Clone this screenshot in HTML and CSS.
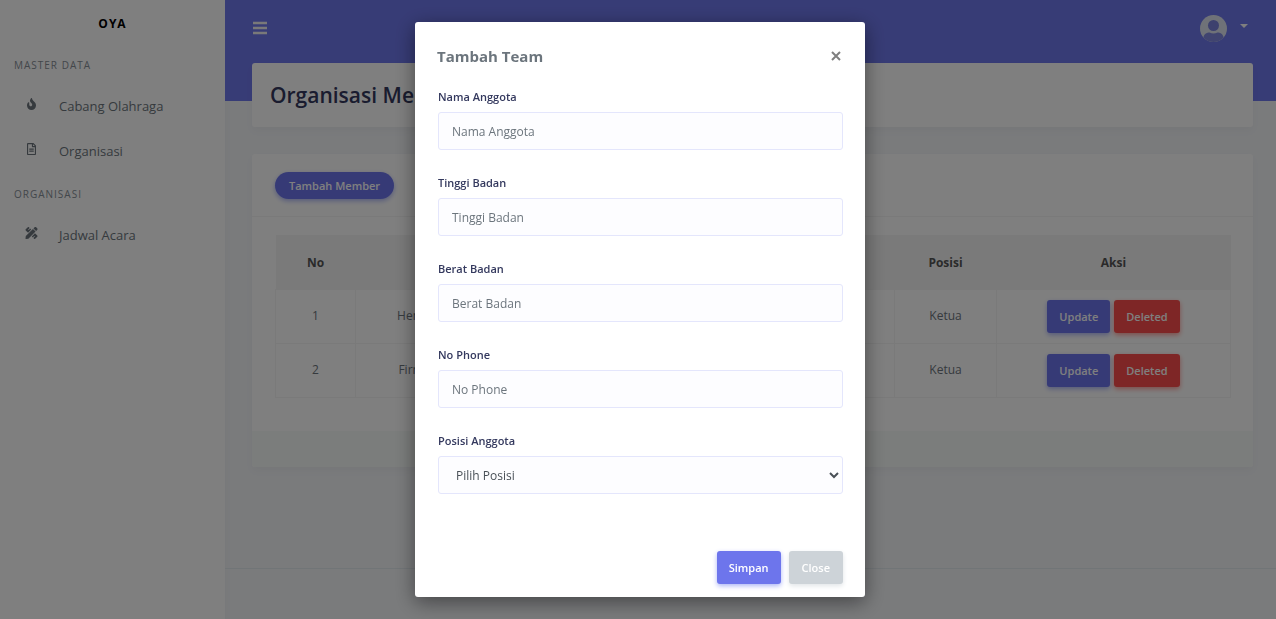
FILE: index.html
```html
<!DOCTYPE html>
<html lang="id">
<head>
<meta charset="utf-8">
<meta name="viewport" content="width=device-width, initial-scale=1">
<title>OYA</title>
<link rel="stylesheet" href="styles.css">
</head>
<body>
<div class="layout">
  <aside class="sidebar">
    <a class="brand" href="#">OYA</a>
    <nav class="menu">
      <h2 class="menu-header">MASTER DATA</h2>
      <a class="menu-link" href="#">
        <svg class="menu-icon" viewBox="0 0 384 512"><path d="M216 23.900c0-23.800-30.700-33-44-13.200C48 191.900 224 200 224 288c0 35.600-29.100 64.500-64.800 64-35.100-.5-63.200-29.800-63.200-64.900v-85.500c0-21.700-26.500-32.200-41.400-16.500C27.800 213.200 0 261.300 0 320c0 105.900 86.100 192 192 192s192-86.100 192-192c0-170.300-168-193-168-296.100z"/></svg>
        <span>Cabang Olahraga</span>
      </a>
      <a class="menu-link" href="#">
        <svg class="menu-icon" viewBox="0 0 384 512"><path d="M288 248v28c0 6.600-5.400 12-12 12H108c-6.600 0-12-5.400-12-12v-28c0-6.600 5.400-12 12-12h168c6.600 0 12 5.400 12 12zm-12 72H108c-6.600 0-12 5.400-12 12v28c0 6.600 5.400 12 12 12h168c6.600 0 12-5.400 12-12v-28c0-6.600-5.400-12-12-12zm108-188.100V464c0 26.500-21.500 48-48 48H48c-26.500 0-48-21.500-48-48V48C0 21.500 21.500 0 48 0h204.100C264.800 0 277 5.100 286 14.100L369.900 98c9 8.900 14.100 21.200 14.100 33.900zm-128-80V128h76.100L256 51.900zM336 464V176H232c-13.300 0-24-10.700-24-24V48H48v416h288z"/></svg>
        <span>Organisasi</span>
      </a>
      <h2 class="menu-header">ORGANISASI</h2>
      <a class="menu-link" href="#">
        <svg class="menu-icon" viewBox="0 0 512 512"><path d="M109.500 244l134.600-134.600-44.100-44.100-61.700 61.700a7.900 7.900 0 0 1-11.200 0l-11.200-11.200c-3.100-3.100-3.100-8.100 0-11.200l61.700-61.700-33.600-33.700C131-3.100 111.400-3.100 99 9.300L9.300 99c-12.400 12.400-12.400 32.500 0 45l100.200 100zM497.900 124.800c18.800-18.800 18.800-49.200 0-67.900l-42.800-42.800c-18.800-18.800-49.200-18.800-68 0l-46.300 46.300 110.800 110.800zM318.400 82.600L12.900 388.200.2 485.300c-1.900 15 10.800 27.700 25.800 26l97.200-12.900 305.600-305.500zM402.700 267.600L268 402.200l44.200 44.200 61.700-61.700a7.900 7.900 0 0 1 11.200 0l11.200 11.200c3.100 3.100 3.100 8.100 0 11.200l-61.700 61.700 33.600 33.700c12.400 12.400 32.500 12.400 45 0l89.700-89.700c12.400-12.400 12.400-32.500 0-45z"/></svg>
        <span>Jadwal Acara</span>
      </a>
    </nav>
  </aside>

  <div class="page">
    <header class="navbar">
      <button class="nav-button" type="button" aria-label="Menu">
        <svg class="bars" viewBox="0 0 14 14"><path d="M0 .8h14v2.400H0zM0 5.800h14v2.400H0zM0 10.800h14v2.400H0z"/></svg>
      </button>
      <button class="nav-button user" type="button" aria-label="Akun">
        <svg class="avatar" viewBox="0 0 54 54">
          <defs><clipPath id="disc"><circle cx="27" cy="27" r="27"/></clipPath></defs>
          <g clip-path="url(#disc)">
            <path class="avatar-back" d="M0 0h54v54H0z"/>
            <circle class="avatar-head" cx="27" cy="21" r="11"/>
            <path class="avatar-body" d="M7 54V44c2-7 7-9 12-9q8 4 16 0c5 0 10 2 12 9v10z"/>
          </g>
        </svg>
        <span class="caret"></span>
      </button>
    </header>

    <main class="content">
      <section class="card title-card"><h1 class="page-title">Organisasi Member</h1></section>

      <section class="card">
        <div class="card-header"><button class="button primary pill" type="button">Tambah Member</button></div>
        <div class="card-body">
          <table class="members">
            <colgroup><col class="col-no"><col class="col-name"><col><col><col><col class="col-position"><col class="col-action"></colgroup>
            <thead>
              <tr><th>No</th><th>Nama</th><th>Tinggi</th><th>Berat</th><th>Phone</th><th>Posisi</th><th>Aksi</th></tr>
            </thead>
            <tbody>
              <tr><td>1</td><td>Hendra Saputra</td><td></td><td></td><td></td><td>Ketua</td>
                <td><div class="actions"><button class="button primary" type="button">Update</button><button class="button danger" type="button">Deleted</button></div></td></tr>
              <tr><td>2</td><td>Firman Saputra</td><td></td><td></td><td></td><td>Ketua</td>
                <td><div class="actions"><button class="button primary" type="button">Update</button><button class="button danger" type="button">Deleted</button></div></td></tr>
            </tbody>
          </table>
        </div>
        <div class="card-footer"></div>
      </section>
    </main>
    <footer class="page-footer"></footer>
  </div>
</div>

<div class="backdrop">
  <form class="modal" role="dialog" aria-modal="true" aria-labelledby="modal-title">
    <div class="modal-header">
      <h2 class="modal-title" id="modal-title">Tambah Team</h2>
      <button class="close" type="button" aria-label="Tutup"><svg class="close-icon" viewBox="0 0 10 10"><path d="M1 1l8 8M9 1L1 9"/></svg></button>
    </div>
    <div class="modal-body">
      <div class="field"><label class="label" for="nama">Nama Anggota</label><input class="control" id="nama" type="text" placeholder="Nama Anggota"></div>
      <div class="field"><label class="label" for="tinggi">Tinggi Badan</label><input class="control" id="tinggi" type="text" placeholder="Tinggi Badan"></div>
      <div class="field"><label class="label" for="berat">Berat Badan</label><input class="control" id="berat" type="text" placeholder="Berat Badan"></div>
      <div class="field"><label class="label" for="phone">No Phone</label><input class="control" id="phone" type="text" placeholder="No Phone"></div>
      <div class="field"><label class="label" for="posisi">Posisi Anggota</label><select class="control" id="posisi"><option>Pilih Posisi</option><option>Ketua</option></select></div>
    </div>
    <div class="modal-footer">
      <button class="button primary" type="button">Simpan</button>
      <button class="button secondary" type="button">Close</button>
    </div>
  </form>
</div>
</body>
</html>
```
FILE: styles.css
```css
* { box-sizing: border-box; }

body {
  margin: 0;
  background: #f4f6f9;
  color: #6c757d;
  font: 12px/20px "Open Sans", "Noto Sans", sans-serif;
}

h1, h2 { margin: 0; }
a { color: inherit; text-decoration: none; }
button, input, select { font: inherit; }

.layout { display: flex; min-height: 100vh; }

.sidebar { flex: 0 0 225px; background: #fff; box-shadow: 0 4px 8px rgba(0, 0, 0, .03); }
.brand {
  display: block;
  padding: 14px 0;
  color: #000;
  font-weight: 700;
  letter-spacing: 1px;
  text-align: center;
}
.menu-header {
  padding: 7px 14px 8px;
  color: #868e96;
  font-size: 10px;
  font-weight: 400;
  line-height: 20px;
  letter-spacing: 1px;
}
.menu-link { display: flex; align-items: center; gap: 20px; height: 45px; padding: 0 24px; font-size: 13px; }
.menu-link + .menu-header { margin-top: 4px; }
.menu-icon { width: 15px; height: 12px; margin-bottom: 4px; fill: #6c757d; }

.page {
  flex: 1;
  display: flex;
  flex-direction: column;
  min-width: 0;
  background: linear-gradient(#6f78ec 101px, transparent 101px);
}
.navbar { display: flex; align-items: center; justify-content: space-between; height: 63px; padding: 0 28px 7px; }
.nav-button { display: flex; align-items: center; padding: 0; border: 0; background: none; }
.user { gap: 13px; }
.bars { width: 14px; height: 14px; fill: #f2f2f2; }
.avatar { width: 27px; height: 27px; }
.avatar-back { fill: #dfe5f0; }
.avatar-head { fill: #7a82dc; }
.avatar-body { fill: #8189e0; }
.caret { margin-bottom: 4px; border: 4px solid transparent; border-top-color: #fff; border-bottom: 0; }

.content { display: flex; flex-direction: column; gap: 27px; padding: 0 23px 27px 27px; }
.card { border-radius: 3px; background: #fff; box-shadow: 0 4px 8px rgba(0, 0, 0, .03); }
.title-card { padding: 16px 18px; }
.page-title { color: #34395e; font-size: 21px; font-weight: 600; line-height: 32px; }
.card-header { display: flex; align-items: center; height: 63px; padding: 0 23px; border-bottom: 1px solid #f4f4f4; }
.card-body { padding: 18px 22px 33px 23px; }
.card-footer { height: 36px; border-radius: 0 0 3px 3px; background: #f7fbf8; }

.members { width: 100%; table-layout: fixed; border-collapse: collapse; text-align: center; }
.members th { height: 54px; padding: 2px 0 0; background: #f5f5f5; color: #555; font-weight: 700; }
.members td { height: 54px; padding: 0; border: 1px solid #f4f4f4; }
.col-no { width: 80px; }
.col-name { width: 172px; }
.col-position { width: 102px; }
.col-action { width: 234px; }
.actions { display: flex; justify-content: center; gap: 4px; }

.button {
  padding: 6px 12px;
  border: 0;
  border-radius: 3px;
  color: #fff;
  font-size: 11px;
  font-weight: 600;
  line-height: 21px;
}
.primary { background: #6d75ec; box-shadow: 0 2px 5px #acb5f6; }
.danger { background: #fc4d4c; box-shadow: 0 2px 5px #fd9b96; }
.secondary { padding: 6px 13px; background: #cdd3d8; box-shadow: 0 2px 5px #e1e5e8; }
.pill { padding: 3px 14px; border-radius: 14px; }

.page-footer { height: 51px; margin-top: auto; border-top: 1px solid #e3eaef; }

.backdrop {
  position: fixed;
  inset: 0;
  overflow: auto;
  padding: 22px 16px 22px 20px;
  background: rgba(0, 0, 0, .5);
}
.modal {
  max-width: 450px;
  margin: 0 auto;
  border-radius: 3px;
  background: #fff;
  box-shadow: 0 5px 20px rgba(0, 0, 0, .45);
}
.modal-header { display: flex; align-items: center; justify-content: space-between; padding: 22px 22px 8px; }
.modal-title { font-size: 15px; font-weight: 700; line-height: 24px; }
.close { display: flex; padding: 2px; border: 0; background: none; }
.close-icon { width: 10px; height: 10px; stroke: #7f7f7f; stroke-width: 2; }
.modal-body { display: grid; gap: 23px; padding: 11px 22px 22px 23px; }
.field { display: grid; gap: 5px; }
.label { color: #34395e; font-size: 11px; font-weight: 600; line-height: 20px; }
.control {
  width: 100%;
  height: 38px;
  padding: 0 13px;
  border: 1px solid #e4e6fc;
  border-radius: 3px;
  background: #fdfdff;
  color: #495057;
}
.control::placeholder { color: #6c757d; opacity: 1; }
.modal-footer { display: flex; justify-content: flex-end; gap: 8px; padding: 35px 22px 13px; }
```
